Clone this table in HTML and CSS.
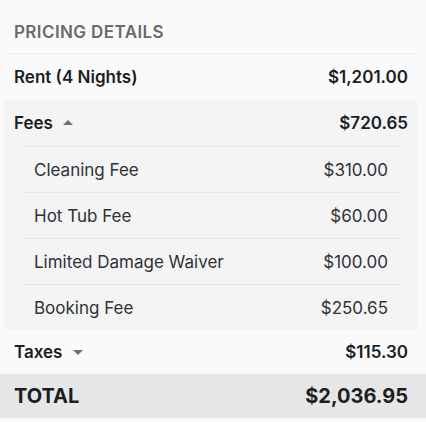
FILE: index.html
```html
<!DOCTYPE html>
<html lang="en">

<head>
    <meta charset="UTF-8">
    <meta name="viewport" content="width=device-width, initial-scale=1.0">
    <title>Pricing details</title>
    <link rel="stylesheet" href="styles.css">
</head>

<body>
    <div class="pricing">
        <h3 class="title">Pricing Details</h3>

        <div class="row main">
            <span>Rent (4 Nights)</span>
            <span>$1,201.00</span>
        </div>

        <div class="group open">
            <div class="row main">
                <span>Fees <span class="caret up"></span></span>
                <span>$720.65</span>
            </div>
            <div class="sublist">
                <div class="row sub"><span>Cleaning Fee</span><span>$310.00</span></div>
                <div class="row sub"><span>Hot Tub Fee</span><span>$60.00</span></div>
                <div class="row sub"><span>Limited Damage Waiver</span><span>$100.00</span></div>
                <div class="row sub"><span>Booking Fee</span><span>$250.65</span></div>
            </div>
        </div>

        <div class="row main taxes">
            <span>Taxes <span class="caret down"></span></span>
            <span>$115.30</span>
        </div>

        <div class="row total">
            <span>TOTAL</span>
            <span>$2,036.95</span>
        </div>
    </div>
</body>

</html>
```

FILE: styles.css
```css
* {
    margin: 0;
    padding: 0;
    box-sizing: border-box;
}

body {
    background: #fafafb;
    font-family: "Inter", "Liberation Sans", sans-serif;
    color: #1b1e22;
}

.pricing {
    padding-top: 8px;
}

.title {
    margin: 0 10px 0 8px;
    padding: 14px 6px 0 6px;
    height: 46px;
    border-bottom: 1px solid #ececee;
    font-size: 17px;
    font-weight: 600;
    letter-spacing: 0.4px;
    text-transform: uppercase;
    color: #6a6a6c;
}

.row {
    display: flex;
    justify-content: space-between;
    align-items: center;
    height: 46px;
}

.main {
    margin: 0 8px 0 4px;
    padding: 0 10px;
    font-size: 17px;
    font-weight: 600;
}

.group {
    margin: 0 8px 0 4px;
    background: #f4f4f5;
    border-radius: 4px;
}

.group .main {
    margin: 0;
}

.sublist {
    margin: 0 18px 0 20px;
}

.sub {
    padding: 0 12px 0 10px;
    border-top: 1px solid #e6e6e8;
    font-size: 17px;
    font-weight: 400;
    color: #2f3236;
}

.taxes {
    height: 44px;
}

.caret {
    display: inline-block;
    width: 0;
    height: 0;
    margin-left: 6px;
    vertical-align: middle;
    border-left: 5px solid transparent;
    border-right: 5px solid transparent;
}

.caret.up {
    border-bottom: 5px solid #707072;
    margin-top: -3px;
}

.caret.down {
    border-top: 5px solid #707072;
    margin-top: -1px;
}

.total {
    height: 44px;
    padding: 0 18px 0 14px;
    background: #e6e6e7;
    font-size: 20px;
    font-weight: 700;
}
```
